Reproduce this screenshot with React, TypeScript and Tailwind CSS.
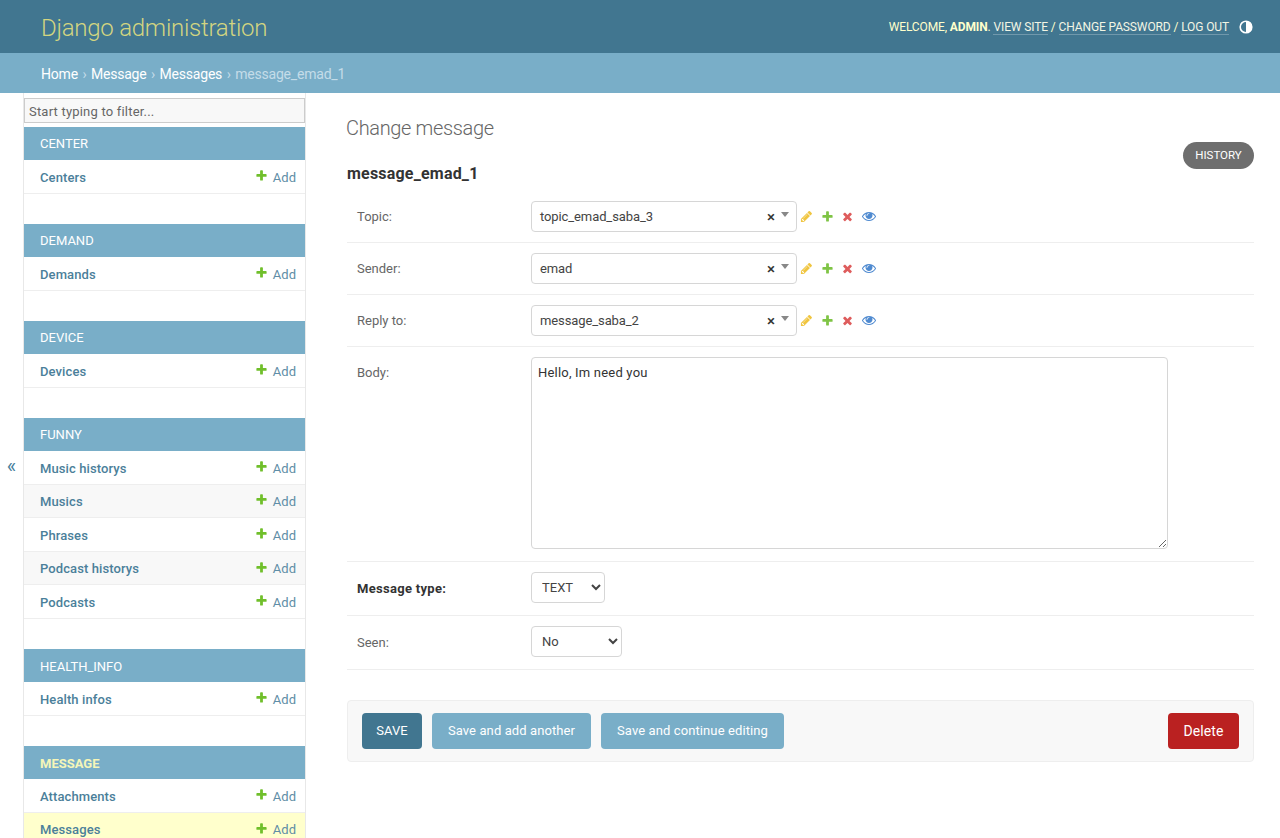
import React from 'react';

const PLUS = 'M1600 796v192q0 40-28 68t-68 28h-416v416q0 40-28 68t-68 28h-192q-40 0-68-28t-28-68v-416h-416q-40 0-68-28t-28-68v-192q0-40 28-68t68-28h416v-416q0-40 28-68t68-28h192q40 0 68 28t28 68v416h416q40 0 68 28t28 68z';
const CROSS = 'M1490 1322q0 40-28 68l-136 136q-28 28-68 28t-68-28l-294-294-294 294q-28 28-68 28t-68-28l-136-136q-28-28-28-68t28-68l294-294-294-294q-28-28-28-68t28-68l136-136q28-28 68-28t68 28l294 294 294-294q28-28 68-28t68 28l136 136q28 28 28 68t-28 68l-294 294 294 294q28 28 28 68z';
const PENCIL = 'M491 1536l91-91-235-235-91 91v107h128v128h107zm523-928q0-22-22-22-10 0-17 7l-542 542q-7 7-7 17 0 22 22 22 10 0 17-7l542-542q7-7 7-17zm-54-192l416 416-832 832h-416v-416zm683 96q0 53-37 90l-166 166-416-416 166-165q36-38 90-38 53 0 91 38l235 234q37 39 37 91z';
const EYE = 'M1664 960q-152-236-381-353 61 104 61 225 0 185-131.500 316.500t-316.500 131.500-316.500-131.500-131.500-316.500q0-121 61-225-229 117-381 353 133 205 333.500 326.500t434.500 121.500 434.500-121.500 333.500-326.500zm-720-384q0-20-14-34t-34-14q-125 0-214.500 89.500t-89.500 214.500q0 20 14 34t34 14 34-14 14-34q0-86 61-147t147-61q20 0 34-14t14-34zm848 384q0 34-20 69-140 230-376.500 368.500t-499.500 138.500-499.500-139-376.500-368q-20-35-20-69t20-69q140-229 376.500-368t499.500-139 499.500 139 376.500 368q20 35 20 69z';

const Icon = ({ d, color, size = 14 }: { d: string; color: string; size?: number }) => (
  <svg viewBox="0 0 1792 1792" width={size} height={size} className="shrink-0">
    <path d={d} fill={color} />
  </svg>
);

const sections = [
  { name: 'CENTER', models: ['Centers'] },
  { name: 'DEMAND', models: ['Demands'] },
  { name: 'DEVICE', models: ['Devices'] },
  { name: 'FUNNY', models: ['Music historys', 'Musics', 'Phrases', 'Podcast historys', 'Podcasts'] },
  { name: 'HEALTH_INFO', models: ['Health infos'] },
  { name: 'MESSAGE', models: ['Attachments', 'Messages'], current: true },
];

const Sidebar = () => (
  <aside className="flex w-[306px] shrink-0">
    <div className="flex w-[23px] shrink-0 flex-col items-center justify-center text-[20px] leading-none text-[#447e9b]">«</div>
    <div className="w-[283px] border-x border-[#e8e8e8] pt-[5px]">
      <input
        readOnly
        placeholder="Start typing to filter..."
        className="mb-[4px] block h-[25px] w-full border border-[#ccc] bg-[#f8f8f8] px-[4px] pt-[1px] text-[13px] tracking-[0.2px] text-[#333] outline-none placeholder:text-[#666]"
      />
      {sections.map((s) => (
        <div key={s.name} className="mb-[30.4px]">
          <div className={`flex h-[33px] items-center bg-[#79aec8] px-[16px] pt-[1px] text-[13px] ${s.current ? 'font-bold text-[#f5f6b8]' : 'text-white'}`}>
            {s.name}
          </div>
          {s.models.map((m, i) => (
            <div
              key={m}
              className={`flex h-[33.6px] items-center justify-between border-b border-[#eee] pl-[16px] pr-[9px] pt-[2px] text-[13px] ${
                m === 'Messages' ? 'bg-[#ffffcc]' : i % 2 === 1 ? 'bg-[#f8f8f8]' : 'bg-white'
              }`}
            >
              <span className="font-medium tracking-[0.1px] text-[#4b7f9a]">{m}</span>
              <span className="flex items-center gap-[5px] text-[#5f8ea6]">
                <span className="-mt-[4px]"><Icon d={PLUS} color="#70bf2b" size={13} /></span>
                Add
              </span>
            </div>
          ))}
        </div>
      ))}
    </div>
  </aside>
);

const RelatedSelect = ({ value }: { value: string }) => (
  <div className="flex items-center">
    <div className="flex h-[31px] w-[266px] items-center rounded-[4px] border border-[#d6d6d6] bg-white pl-[8px] pr-[7px] text-[13px] text-[#444]">
      <span className="flex-1 pt-[1px] tracking-[-0.1px]">{value}</span>
      <span className="mt-[2px] text-[15px] font-semibold leading-none text-[#333]">×</span>
      <span className="mb-[5px] ml-[6px] h-0 w-0 border-x-[4px] border-t-[5px] border-x-transparent border-t-[#888]" />
    </div>
    <div className="mb-[1px] ml-[3px] flex items-center gap-[7px]">
      <Icon d={PENCIL} color="#f0c53f" size={13} />
      <span className="ml-[1px]"><Icon d={PLUS} color="#7fc445" size={13} /></span>
      <Icon d={CROSS} color="#de5c5c" size={13} />
      <span className="ml-[1px]"><Icon d={EYE} color="#4f8ad0" size={14} /></span>
    </div>
  </div>
);

const Row = ({ label, bold, pb = 'pb-[10px]', labelPt = 'pt-[6px]', children }: { label: string; bold?: boolean; pb?: string; labelPt?: string; children: React.ReactNode }) => (
  <div className={`flex border-b border-[#eee] pl-[10px] pt-[10px] ${pb}`}>
    <div className={`w-[174px] shrink-0 text-[13px] ${labelPt} ${bold ? 'font-bold tracking-[0.3px] text-[#333]' : 'text-[#666]'}`}>{label}</div>
    {children}
  </div>
);

export default function App() {
  return (
    <div className="h-screen overflow-hidden bg-white text-[#333] [font-family:Roboto,sans-serif]">
      <header className="flex h-[53px] items-center justify-between bg-[#417690] pl-[41px] pr-[27px]">
        <div className="pt-[2px] text-[24px] font-light tracking-[-0.25px] text-[#d3d580]">Django administration</div>
        <div className="flex items-center text-[12px] uppercase tracking-[-0.12px] text-[#ffffcc]">
          <span>
            Welcome, <strong>admin</strong>.{' '}
            <span className="border-b border-white/25 text-[#f2f5e4]">View site</span> /{' '}
            <span className="border-b border-white/25 text-[#f2f5e4]">Change password</span> /{' '}
            <span className="border-b border-white/25 text-[#f2f5e4]">Log out</span>
          </span>
          <svg viewBox="0 0 14 14" width={14} height={14} className="ml-[10px]">
            <circle cx="7" cy="7" r="5.8" fill="none" stroke="#fff" strokeWidth="1.6" />
            <path d="M7 1.2a5.800 5.800 0 0 1 0 11.600z" fill="#fff" />
          </svg>
        </div>
      </header>
      <nav className="flex h-[40px] items-center bg-[#79aec8] pl-[41px] pt-[2px] text-[14px] tracking-[-0.2px] text-[#c4dce8]">
        <span className="text-white">Home</span>
        <span className="mx-[4.5px]">›</span>
        <span className="text-white">Message</span>
        <span className="mx-[4.5px]">›</span>
        <span className="text-white">Messages</span>
        <span className="mx-[4.5px]">›</span>
        message_emad_1
      </nav>
      <div className="flex h-[745px] overflow-hidden">
        <Sidebar />
        <main className="min-w-0 flex-1 pl-[40px] pr-[26px] pt-[22px]">
          <h1 className="text-[20px] font-light leading-[26px] tracking-[-0.35px] text-[#666]">Change message</h1>
          <div className="flex items-start justify-between">
            <h2 className="ml-[1px] pt-[22px] text-[16px] font-bold leading-[22px] tracking-[0.2px] text-[#333]">message_emad_1</h2>
            <span className="mb-[22px] mt-[1px] flex h-[27px] w-[71px] items-center justify-center rounded-full bg-[#6e6e6e] text-[11.5px] text-white">HISTORY</span>
          </div>
          <div className="ml-[1px]">
            <Row label="Topic:"><RelatedSelect value="topic_emad_saba_3" /></Row>
            <Row label="Sender:"><RelatedSelect value="emad" /></Row>
            <Row label="Reply to:"><RelatedSelect value="message_saba_2" /></Row>
            <Row label="Body:" pb="pb-[12px]">
              <textarea
                readOnly
                value="Hello, Im need you"
                className="block h-[192px] w-[637px] rounded-[4px] border border-[#d6d6d6] px-[6px] py-[5px] text-[13px] tracking-[0.2px] text-[#333] outline-none"
              />
            </Row>
            <Row label="Message type:" bold pb="pb-[12px]" labelPt="pt-[7px]">
              <select className="h-[31px] w-[74px] rounded-[4px] border border-[#d6d6d6] bg-white pl-[6px] text-[13px] text-[#444]">
                <option>TEXT</option>
              </select>
            </Row>
            <Row label="Seen:" pb="pb-[12px]" labelPt="pt-[7px]">
              <select className="h-[31px] w-[91px] rounded-[4px] border border-[#d6d6d6] bg-white pl-[6px] text-[13px] text-[#444]">
                <option>No</option>
              </select>
            </Row>
          </div>
          <div className="ml-[1px] mt-[30px] flex items-center gap-[10px] rounded-[4px] border border-[#eee] bg-[#f8f8f8] px-[14px] py-[12px] text-[13px] tracking-[0.1px] text-white">
            <button className="h-[36px] w-[60px] rounded-[4px] bg-[#417690]">SAVE</button>
            <button className="h-[36px] w-[159px] rounded-[4px] bg-[#79aec8]">Save and add another</button>
            <button className="h-[36px] w-[183px] rounded-[4px] bg-[#79aec8]">Save and continue editing</button>
            <button className="ml-auto h-[36px] w-[71px] rounded-[4px] bg-[#ba2121] text-[14px]">Delete</button>
          </div>
        </main>
      </div>
    </div>
  );
}
